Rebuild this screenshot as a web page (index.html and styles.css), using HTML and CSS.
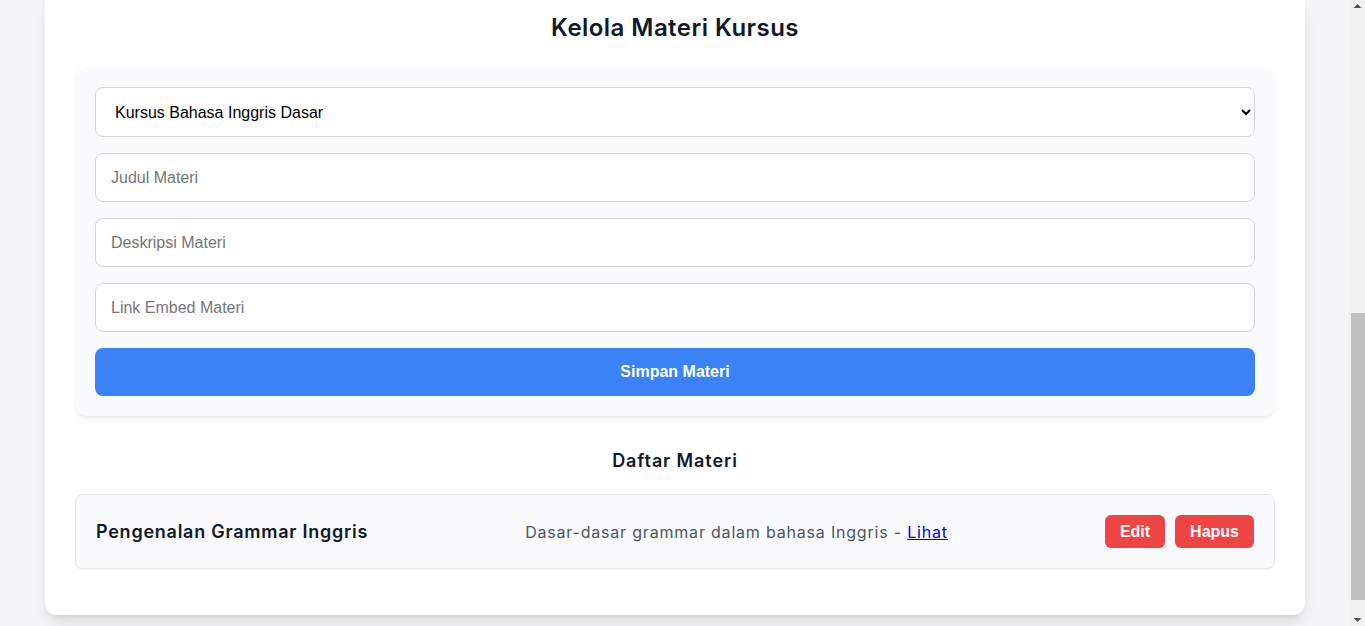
FILE: index.html
```html
<!DOCTYPE html>
<html lang="id">
<head>
<meta charset="utf-8">
<title>Kelola Materi Kursus</title>
<link rel="stylesheet" href="styles.css">
</head>
<body>
<div class="container">
  <section class="section materials">
    <h2 class="title">Kelola Materi Kursus</h2>
    <form class="form-card">
      <select class="field select">
        <option>Kursus Bahasa Inggris Dasar</option>
      </select>
      <input class="field" type="text" placeholder="Judul Materi">
      <input class="field" type="text" placeholder="Deskripsi Materi">
      <input class="field" type="text" placeholder="Link Embed Materi">
      <button class="btn-primary" type="button">Simpan Materi</button>
    </form>

    <h3 class="subtitle">Daftar Materi</h3>
    <ul class="list">
      <li class="item">
        <span class="item-title">Pengenalan Grammar Inggris</span>
        <span class="item-desc">Dasar-dasar grammar dalam bahasa Inggris - <a href="#" class="link">Lihat</a></span>
        <span class="actions">
          <button class="btn-danger" type="button">Edit</button>
          <button class="btn-danger" type="button">Hapus</button>
        </span>
      </li>
    </ul>
  </section>
</div>

<div class="scrollbar" aria-hidden="true">
  <svg class="sb-arrow" width="15" height="17" viewBox="0 0 15 17"><path d="M3.5 8 L7.5 4 L11.5 8 Z" fill="#505050"/></svg>
  <div class="sb-track"><div class="sb-thumb"></div></div>
  <svg class="sb-arrow" width="15" height="17" viewBox="0 0 15 17"><path d="M3.5 9 L7.5 13 L11.5 9 Z" fill="#505050"/></svg>
</div>
</body>
</html>
```

FILE: styles.css
```css
* { box-sizing: border-box; }

html, body { height: 100%; overflow: hidden; }

body {
  margin: 0;
  padding: 0 15px 0 0;
  background: #f3f4f6;
  font-family: "Inter", "Noto Sans", sans-serif;
  color: #111827;
}

.container {
  width: 1260px;
  margin: 0 auto;
  background: #ffffff;
  border-radius: 0 0 12px 12px;
  padding: 12px 30px 30px;
  box-shadow: 0 10px 15px -3px rgba(0,0,0,0.1), 0 4px 6px -4px rgba(0,0,0,0.1);
}

.section { display: flex; flex-direction: column; }

.title {
  margin: 0 0 23px;
  font-size: 24px;
  line-height: 32px;
  font-weight: 600;
  letter-spacing: 0.45px;
  text-align: center;
  color: #111827;
}

.form-card {
  margin: 0;
  background: #f9fafb;
  border-radius: 12px;
  padding: 20px;
  display: flex;
  flex-direction: column;
  gap: 16px;
  box-shadow: 0 4px 6px -1px rgba(0,0,0,0.07), 0 2px 4px -2px rgba(0,0,0,0.05);
}

.field {
  display: block;
  width: 100%;
  height: 49px;
  padding: 0 15px;
  border: 1px solid #d1d5db;
  border-radius: 8px;
  background: #ffffff;
  font-family: "Liberation Sans", Arial, sans-serif;
  font-size: 16px;
  color: #000000;
  outline: none;
}

.field::placeholder { color: #757575; }

.select { height: 50px; padding: 0 12px 0 15px; }

.btn-primary {
  display: block;
  width: 100%;
  height: 48px;
  border: 0;
  border-radius: 8px;
  background: #3b82f6;
  color: #ffffff;
  font-family: "Liberation Sans", Arial, sans-serif;
  font-size: 16px;
  font-weight: 700;
  cursor: pointer;
}

.subtitle {
  margin: 31px 0 19px;
  font-size: 18px;
  line-height: 28px;
  font-weight: 600;
  letter-spacing: 0.9px;
  text-align: center;
  color: #111827;
}

.list {
  list-style: none;
  margin: 0 0 16px;
  padding: 0;
}

.item {
  display: flex;
  align-items: center;
  justify-content: space-between;
  padding: 20px;
  height: 75px;
  background: #f9fafb;
  border: 1px solid #e5e7eb;
  border-radius: 8px;
  box-shadow: 0 1px 2px rgba(0,0,0,0.05);
}

.item-title {
  font-size: 18px;
  font-weight: 600;
  letter-spacing: 0.75px;
  color: #111827;
}

.item-desc {
  font-size: 16px;
  letter-spacing: 0.8px;
  color: #4b5563;
}

.link { color: #0000ee; text-decoration: underline; }

.actions { display: flex; gap: 10px; }

.btn-danger {
  height: 33px;
  padding: 0 15px;
  border: 0;
  border-radius: 6px;
  background: #ef4444;
  color: #ffffff;
  font-family: "Liberation Sans", Arial, sans-serif;
  font-size: 16px;
  font-weight: 700;
  cursor: pointer;
}

.scrollbar {
  position: fixed;
  top: 0;
  right: 0;
  width: 15px;
  height: 100%;
  background: #f1f1f1;
  display: flex;
  flex-direction: column;
}

.sb-arrow { display: block; flex: none; }

.sb-track {
  flex: 1;
  position: relative;
}

.sb-thumb {
  position: absolute;
  left: 1px;
  right: 0;
  top: 296px;
  height: 287px;
  background: #c1c1c1;
}
```
